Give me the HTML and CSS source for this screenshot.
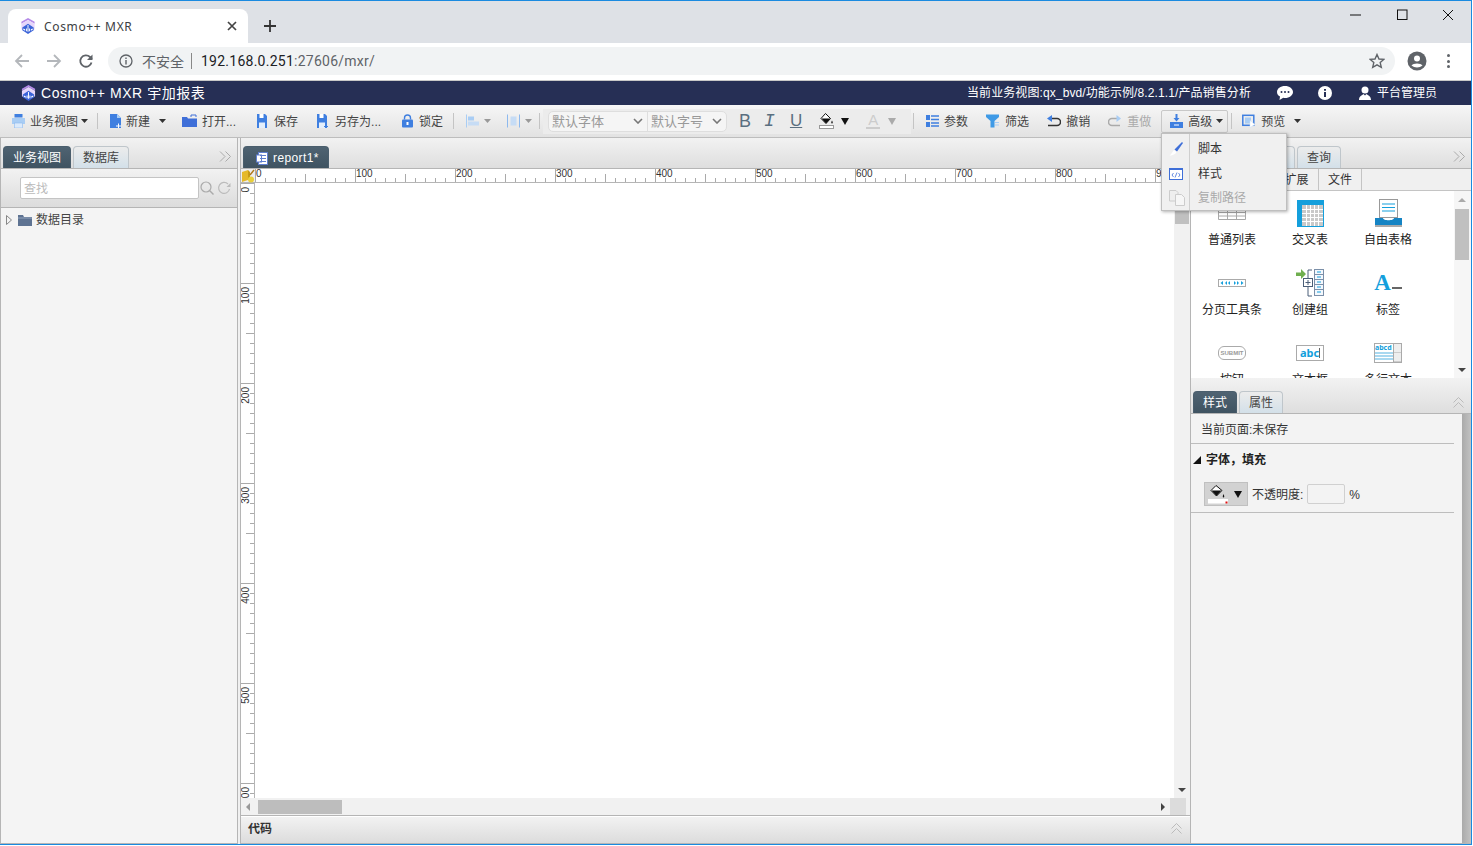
FILE: index.html
```html
<!DOCTYPE html>
<html lang="zh-CN">
<head>
<meta charset="utf-8">
<title>Cosmo++ MXR</title>
<link rel="stylesheet" href="styles.css">
</head>
<body>
<svg class="defs" width="0" height="0">
  <symbol id="logo" viewBox="0 0 16 18">
    <path d="M8 0 15 4 15 6 8 2 1 6 1 4Z" fill="#b58be8"/>
    <path d="M1 6 8 2 15 6 15 12 8 16 1 12Z" fill="#e6d6fa"/>
    <path d="M2 10 8 6 14 10 14 13 8 17 2 13Z" fill="#3a63d8"/>
    <path d="M3 12.500V11L5 12V13.500ZM6 11H7V14H6ZM7.500 7.500 8.500 7.500 8.500 14.500 7.500 14.500ZM9 11H10V14H9ZM11 12 13 11V12.500L11 13.500Z" fill="#fff"/>
  </symbol>
  <symbol id="caret" viewBox="0 0 7 4"><path d="M0 0H7L3.500 4Z"/></symbol>
  <symbol id="chev-r" viewBox="0 0 13 11"><path d="M1 .5 6 5.500 1 10.500M6.500 .5 11.500 5.500 6.500 10.500" fill="none" stroke="#aaa"/></symbol>
  <symbol id="chev-u" viewBox="0 0 11 11"><path d="M.5 5.500 5.500 .5 10.500 5.500M.5 10.500 5.500 5.500 10.500 10.500" fill="none" stroke="#bbb"/></symbol>
  <symbol id="fill" viewBox="0 0 15 16"><path d="M6.500 .5 2 5.500 7 10.500 11.500 5.500Z" fill="#fff" stroke="#111"/><path d="M2.500 5.500H11.500L7 10.500Z" fill="#111"/><path d="M13 7.500C12 9.500 12 10.500 13 10.500S14 9.500 13 7.500Z" fill="#111"/><rect x=".5" y="12.500" width="14" height="3" fill="#fff" stroke="#999"/></symbol>
</svg>

<div class="window">
  <div class="tabstrip">
    <div class="ctab">
      <svg class="fav"><use href="#logo"/></svg>
      <span class="ctab-title">Cosmo++ MXR</span>
      <svg class="ctab-x" viewBox="0 0 10 10"><path d="M1 1 9 9M9 1 1 9" stroke="#444" stroke-width="1.700"/></svg>
    </div>
    <svg class="newtab" viewBox="0 0 12 12"><path d="M6 0V12M0 6H12" stroke="#333" stroke-width="1.800"/></svg>
    <div class="winctl">
      <svg viewBox="0 0 12 12"><path d="M0 6H11" stroke="#111"/></svg>
      <svg viewBox="0 0 12 12"><rect x="1.500" y="1" width="9.500" height="9.500" fill="none" stroke="#111"/></svg>
      <svg viewBox="0 0 12 12"><path d="M1 1 11 11M11 1 1 11" stroke="#111"/></svg>
    </div>
  </div>

  <div class="navbar">
    <svg class="nav-ic" viewBox="0 0 16 16"><path d="M15 8H2M8 2 2 8 8 14" fill="none" stroke="#b4b7bb" stroke-width="1.800"/></svg>
    <svg class="nav-ic" viewBox="0 0 16 16"><path d="M1 8H14M8 2 14 8 8 14" fill="none" stroke="#b4b7bb" stroke-width="1.800"/></svg>
    <svg class="nav-ic" viewBox="0 0 16 16"><path d="M13.500 9.500A5.700 5.700 0 1 1 12 4L14 6" fill="none" stroke="#5f6368" stroke-width="1.800"/><path d="M14.500 1.500V7H9Z" fill="#5f6368"/></svg>
    <div class="omnibox">
      <svg class="info" viewBox="0 0 14 14"><circle cx="7" cy="7" r="6" fill="none" stroke="#5f6368" stroke-width="1.300"/><path d="M7 6V10.500M7 3.500V5" stroke="#5f6368" stroke-width="1.400"/></svg>
      <span class="insecure">不安全</span>
      <span class="url"><b>192.168.0.251</b>:27606/mxr/</span>
      <svg class="star" viewBox="0 0 16 16"><path d="M8 1.500 10 6 14.800 6.400 11.200 9.600 12.300 14.300 8 11.800 3.700 14.300 4.800 9.600 1.200 6.400 6 6Z" fill="none" stroke="#5f6368" stroke-width="1.400"/></svg>
    </div>
    <svg class="avatar" viewBox="0 0 20 20"><circle cx="10" cy="10" r="9.500" fill="#5f6368"/><circle cx="10" cy="7.500" r="3" fill="#fff"/><path d="M4.500 14.500C6 11.800 14 11.800 15.500 14.500 12.500 17 7.500 17 4.500 14.500Z" fill="#fff"/></svg>
    <div class="dots"><i></i><i></i><i></i></div>
  </div>

  <header class="apphead">
    <svg class="app-logo"><use href="#logo"/></svg>
    <span class="app-name">Cosmo++ MXR 宇加报表</span>
    <span class="cur-view">当前业务视图:qx_bvd/功能示例/8.2.1.1/产品销售分析</span>
    <svg class="hd-chat" viewBox="0 0 16 14"><path d="M8 0C3.500 0 0 2.600 0 6C0 8 1.200 9.600 3 10.600L2.500 14 6.300 11.700C6.900 11.900 7.400 12 8 12 12.500 12 16 9.300 16 6S12.500 0 8 0Z" fill="#fff"/><g fill="#262f55"><circle cx="4.500" cy="6" r="1"/><circle cx="8" cy="6" r="1"/><circle cx="11.500" cy="6" r="1"/></g></svg>
    <svg class="hd-info" viewBox="0 0 14 14"><circle cx="7" cy="7" r="7" fill="#fff"/><path d="M7 6V11M7 3V4.800" stroke="#262f55" stroke-width="2"/></svg>
    <svg class="hd-user" viewBox="0 0 12 14"><circle cx="6" cy="4" r="3.500" fill="#fff"/><path d="M0 14C0 10 3 9.500 4.500 8L6 9.500 7.500 8C9 9.500 12 10 12 14Z" fill="#fff"/></svg>
    <span class="user-name">平台管理员</span>
  </header>

  <div class="toolbar">
    <div class="tool t-view">
      <svg class="ic w13" viewBox="0 0 13 14"><rect x="2.500" y="0" width="8" height="3.500" fill="#3f7fe0"/><rect x="0" y="4" width="13" height="6" fill="#a9cdf4"/><rect x="2.500" y="9" width="8" height="5" fill="#dbeafb" stroke="#8db9ee" stroke-width=".6"/></svg>
      <span>业务视图</span><svg class="caret c-view"><use href="#caret"/></svg>
    </div>
    <i class="sep s-1"></i>
    <div class="tool t-new">
      <svg class="ic w11" viewBox="0 0 11 14"><path d="M0 0H7L11 4V14H0Z" fill="#3f7fe0"/><path d="M7 0V4H11" fill="#a9cdf4"/><path d="M6 12H11M8.500 9.500V14" stroke="#fff"/></svg>
      <span>新建</span><svg class="caret c-new"><use href="#caret"/></svg>
    </div>
    <div class="tool t-open">
      <svg class="ic w15" viewBox="0 0 15 12"><path d="M0 2H5L6 3.500H15V12H0Z" fill="#3f6fd8"/><path d="M9 2V0H14V2" fill="none" stroke="#3f6fd8"/></svg>
      <span>打开...</span>
    </div>
    <div class="tool t-save">
      <svg class="ic w10" viewBox="0 0 10 14"><path d="M0 0H8L10 2V14H0Z" fill="#3f7fe0"/><rect x="2.500" y="0" width="4" height="4" fill="#fff"/><rect x="2" y="8.500" width="6" height="5.500" fill="#e4effc"/></svg>
      <span>保存</span>
    </div>
    <div class="tool t-saveas">
      <svg class="ic w11" viewBox="0 0 11 14"><path d="M0 0H8L10 2V14H0Z" fill="#3f7fe0"/><rect x="2.500" y="0" width="4" height="4" fill="#fff"/><rect x="2" y="8.500" width="6" height="5.500" fill="#e4effc"/><path d="M7 12.500H11" stroke="#3f7fe0"/></svg>
      <span>另存为...</span>
    </div>
    <div class="tool t-lock">
      <svg class="ic w11" viewBox="0 0 11 13"><rect y="5" width="11" height="8" rx="1" fill="#3f7fe0"/><path d="M2.500 5V3.500A3 3 0 0 1 8.500 3.500V5" fill="none" stroke="#3f7fe0" stroke-width="1.400"/><rect x="4.500" y="7.500" width="2" height="3" fill="#fff"/></svg>
      <span>锁定</span>
    </div>
    <i class="sep s-2"></i>
    <div class="tool t-align">
      <svg class="ic w13" viewBox="0 0 13 13"><path d="M.5 0V13" stroke="#a9cdf4"/><rect x="2" y="2" width="6" height="4" fill="#a9cdf4"/><rect x="2" y="7" width="11" height="4" fill="#c6dcf5"/></svg>
      <svg class="caret dim"><use href="#caret"/></svg>
    </div>
    <div class="tool t-dist">
      <svg class="ic w13" viewBox="0 0 13 13"><path d="M.5 0V13M12.500 0V13" stroke="#8db9ee"/><rect x="3.500" y="2" width="6" height="9" fill="#c6dcf5"/></svg>
      <svg class="caret dim"><use href="#caret"/></svg>
    </div>
    <i class="sep s-3"></i>
    <div class="fontgroup">
      <div class="selects">
        <div class="sel sel-font"><span>默认字体</span><svg viewBox="0 0 10 6"><path d="M1 1 5 5 9 1" fill="none" stroke="#777" stroke-width="1.600"/></svg></div>
        <div class="sel sel-size"><span>默认字号</span><svg viewBox="0 0 10 6"><path d="M1 1 5 5 9 1" fill="none" stroke="#777" stroke-width="1.600"/></svg></div>
      </div>
      <span class="fmt f-b">B</span>
      <span class="fmt f-i">I</span>
      <span class="fmt f-u">U</span>
      <svg class="fillic"><use href="#fill"/></svg>
      <span class="tri"></span>
      <span class="fontcolor">A</span>
      <span class="tri tri-dim"></span>
    </div>
    <i class="sep s-4"></i>
    <div class="tool t-param">
      <svg class="ic w13" viewBox="0 0 13 12"><rect width="4" height="5" fill="#3f7fe0"/><rect y="7" width="4" height="5" fill="#3f7fe0"/><path d="M5 1H13M5 4.500H13M5 8H13M5 11H13" stroke="#3f7fe0" stroke-width="1.500"/></svg>
      <span>参数</span>
    </div>
    <div class="tool t-filter">
      <svg class="ic w13" viewBox="0 0 13 13"><path d="M0 0H13V2.500L8.500 6.500V13H4.500V6.500L0 2.500Z" fill="#3f9ae6"/><path d="M9 8H13M9 10.500H13" stroke="#a9cdf4"/></svg>
      <span>筛选</span>
    </div>
    <div class="tool t-undo">
      <svg class="ic w14" viewBox="0 0 14 12"><path d="M3 3.500H10A3.500 3.500 0 0 1 10 10.500H1" fill="none" stroke="#333" stroke-width="1.500"/><path d="M5 0V7L0 3.500Z" fill="#3f7fe0"/></svg>
      <span>撤销</span>
    </div>
    <div class="tool t-redo dimtool">
      <svg class="ic w13" viewBox="0 0 13 12"><path d="M10 3.500H4A3.500 3.500 0 0 0 4 10.500H12" fill="none" stroke="#aaa" stroke-width="1.500"/><path d="M8.500 0V7L13 3.500Z" fill="#a9cdf4"/></svg>
      <span>重做</span>
    </div>
    <div class="tool t-adv">
      <svg class="ic w13" viewBox="0 0 13 14"><path d="M6.500 0V6" stroke="#3f7fe0" stroke-width="2"/><path d="M3.500 4H9.500L6.500 7.500Z" fill="#3f7fe0"/><rect y="8" width="13" height="6" fill="#3f7fe0"/><rect x="4" y="10.500" width="5" height="1" fill="#fff"/></svg>
      <span>高级</span><svg class="caret"><use href="#caret"/></svg>
    </div>
    <i class="sep s-5"></i>
    <div class="tool t-prev">
      <svg class="ic w13" viewBox="0 0 13 13"><rect x=".8" y=".8" width="11" height="10" fill="none" stroke="#3f7fe0" stroke-width="1.500"/><rect x="3" y="3" width="6" height="6" fill="#a9cdf4"/><path d="M8 6 13 10 8 13Z" fill="#fff" stroke="#cfe2f9" stroke-width=".5"/></svg>
      <span>预览</span><svg class="caret c-prev"><use href="#caret"/></svg>
    </div>
  </div>

  <main class="workspace">
    <aside class="leftpanel">
      <div class="tabrow">
        <span class="ptab active lt-1">业务视图</span>
        <span class="ptab lt-2">数据库</span>
        <svg class="chev"><use href="#chev-r"/></svg>
      </div>
      <div class="searchrow">
        <div class="searchbox">查找</div>
        <svg class="s-ic" viewBox="0 0 14 14"><circle cx="6" cy="6" r="5" fill="none" stroke="#aaa" stroke-width="1.200"/><path d="M9.500 9.500 13.500 13.500" stroke="#aaa" stroke-width="1.400"/></svg>
        <svg class="s-ic" viewBox="0 0 14 14"><path d="M12.500 8A5.500 5.500 0 1 1 11 3" fill="none" stroke="#bbb" stroke-width="1.200"/><path d="M13.500 2V6H9.500Z" fill="#bbb"/></svg>
      </div>
      <div class="tree">
        <svg class="tree-ar" viewBox="0 0 6 10"><path d="M.5 .5 5.500 5 .5 9.500Z" fill="none" stroke="#888"/></svg>
        <svg class="tree-fd" viewBox="0 0 14 11"><path d="M0 0H5L6 2H14V11H0Z" fill="#5e7392"/><rect x="0" y="2.500" width="14" height="1" fill="#93a5bd"/></svg>
        <span>数据目录</span>
      </div>
    </aside>

    <section class="center">
      <div class="tabrow center-tabs">
        <span class="ptab active rep-tab">
          <svg class="rep-ic" viewBox="0 0 12 13"><rect x="2.500" y=".5" width="9" height="12" fill="#fff" stroke="#5f7fd0"/><rect x=".5" y="3" width="5" height="7" fill="#fff" stroke="#5f7fd0"/><path d="M4 3.500H10M4 6.500H10M4 9.500H10" stroke="#5f7fd0"/></svg>
          report1*
        </span>
      </div>
      <div class="rulerrow">
        <div class="corner">
          <svg viewBox="0 0 14 14"><path d="M1 3 7 1V11L1 13Z" fill="#e5b92a"/><path d="M7 1 9 3V9L7 11Z" fill="#c79a17"/><circle cx="10" cy="10.500" r="3" fill="#e9cf3a"/><path d="M9 6 13 1" stroke="#b07a1a" stroke-width="1.400"/></svg>
        </div>
        <div class="hruler">
          <span>0</span><span>100</span><span>200</span><span>300</span><span>400</span><span>500</span><span>600</span><span>700</span><span>800</span><span>900</span>
        </div>
      </div>
      <div class="canvasrow">
        <div class="vruler">
          <div><span>0</span></div><div><span>100</span></div><div><span>200</span></div><div><span>300</span></div><div><span>400</span></div><div><span>500</span></div><div><span>600</span></div>
        </div>
        <div class="canvas"></div>
        <div class="vscroll">
          <i class="v-thumb"></i>
          <i class="ar-down"></i>
        </div>
      </div>
      <div class="hscroll">
        <i class="ar-left"></i>
        <i class="h-thumb"></i>
        <i class="ar-right"></i>
        <i class="h-corner"></i>
      </div>
      <div class="codebar">
        <span>代码</span>
        <svg class="chev-u"><use href="#chev-u"/></svg>
      </div>
    </section>

    <aside class="rightpanel">
      <div class="comp">
        <div class="tabrow right-tabs">
          <span class="ptab rt-hidden"></span>
          <span class="ptab rt-query">查询</span>
          <svg class="chev"><use href="#chev-r"/></svg>
        </div>
        <div class="subtabs">
          <span class="sub sub-ext">扩展</span>
          <span class="sub sub-file">文件</span>
        </div>
        <div class="gridwrap">
          <div class="compgrid">
            <div class="cell">
              <div class="cell-ic"><svg width="28" height="28" viewBox="0 0 28 28"><path d="M.5 6.500H27.500V20.500H.5ZM.5 13.500H27.500M.5 17H27.500M9.500 6.500V20.500M18.500 6.500V20.500" fill="#fff" stroke="#a8a8a8"/></svg></div>
              <span>普通列表</span>
            </div>
            <div class="cell">
              <div class="cell-ic"><svg width="27" height="27" viewBox="0 0 27 27"><rect width="27" height="27" fill="#149fdc"/><rect x="5" y="5" width="21" height="21" fill="#c9c9c9"/><path d="M5 9.500H26M5 13.500H26M5 17.500H26M5 21.500H26M9.500 5V26M13.500 5V26M17.500 5V26M21.500 5V26" stroke="#fff"/></svg></div>
              <span>交叉表</span>
            </div>
            <div class="cell">
              <div class="cell-ic"><svg width="27" height="28" viewBox="0 0 27 28"><rect x="4.500" y=".5" width="18" height="18" fill="#fff" stroke="#999"/><path d="M7 5H20M7 8.500H20M7 12H20" stroke="#149fdc" stroke-width="1.200"/><path d="M0 19H8C8 22 19 22 19 19H27V26H0Z" fill="#1584c4"/><rect y="26" width="27" height="2" fill="#aaa"/></svg></div>
              <span>自由表格</span>
            </div>
            <div class="cell">
              <div class="cell-ic"><svg width="28" height="8" viewBox="0 0 28 8"><rect x=".5" y=".5" width="27" height="7" fill="#fff" stroke="#aaa"/><path d="M5 2V6L2.500 4ZM23 2V6L25.500 4Z" fill="#149fdc"/><path d="M9 2V6L7 4ZM12 2V6L10 4ZM16 2V6L18 4ZM19 2V6L21 4Z" fill="#149fdc"/></svg></div>
              <span>分页工具条</span>
            </div>
            <div class="cell">
              <div class="cell-ic"><svg width="28" height="28" viewBox="0 0 28 28"><path d="M0 3.500H5V0L10 5 5 10V7H0Z" fill="#6fae4e"/><path d="M16 1H12V9M12 17V27H16" fill="none" stroke="#4b5f78"/><rect x="7.500" y="9.500" width="9" height="8" fill="#fff" stroke="#4b5f78"/><path d="M9.500 13.500H14.500M12 11V16" stroke="#4b5f78"/><rect x="18.500" y=".5" width="9" height="26" fill="#f4f8fd" stroke="#7b8fa8"/><path d="M18.500 5.500H27.500M18.500 10.500H27.500M18.500 15.500H27.500M18.500 20.500H27.500" stroke="#7b8fa8"/><path d="M21 3H25M21 8H25M21 13H25M21 18H25M21 23H25" stroke="#149fdc"/></svg></div>
              <span>创建组</span>
            </div>
            <div class="cell">
              <div class="cell-ic ic-label"><span class="big-a">A</span><i class="a-dash"></i></div>
              <span>标签</span>
            </div>
            <div class="cell">
              <div class="cell-ic"><span class="submit">SUBMIT</span></div>
              <span>按钮</span>
            </div>
            <div class="cell">
              <div class="cell-ic"><span class="abc">abc<i></i></span></div>
              <span>文本框</span>
            </div>
            <div class="cell">
              <div class="cell-ic"><span class="multi"><span class="multi-t"><b>abcd</b><i></i><i></i><i></i></span><span class="multi-s"><i></i><i></i></span></span></div>
              <span>多行文本</span>
            </div>
          </div>
          <div class="gscroll">
            <i class="ar-up"></i>
            <i class="g-thumb"></i>
            <i class="ar-down g-down"></i>
          </div>
        </div>
      </div>

      <div class="stylepane">
        <div class="tabrow style-tabs">
          <span class="ptab active st-1">样式</span>
          <span class="ptab st-2">属性</span>
          <svg class="chev-u"><use href="#chev-u"/></svg>
        </div>
        <div class="stylebody">
          <div class="stylecontent">
            <div class="curpage">当前页面:未保存</div>
            <div class="sect"><i class="sect-tri"></i><b>字体，填充</b></div>
            <div class="fillrow">
              <div class="fillbtn">
                <svg class="fillbtn-ic" viewBox="0 0 20 19"><path d="M8 .5 3 5.500 8.500 11 14 5.500Z" fill="#fff" stroke="#111"/><path d="M3.500 5.500H13.500L8.500 11Z" fill="#111"/><path d="M15.500 9C14.500 11 14.500 12.500 15.500 12.500S16.500 11 15.500 9Z" fill="#111"/><rect y="14" width="20" height="4.500" fill="#fff"/><rect x="17.500" y="16.500" width="2" height="2" fill="#e01010"/></svg>
                <span class="tri"></span>
              </div>
              <span class="op-label">不透明度:</span>
              <div class="opacity"></div>
              <span class="pct">%</span>
            </div>
          </div>
          <div class="style-scroll"></div>
        </div>
      </div>
    </aside>
  </main>
</div>

<div class="menu">
  <div class="mi">
    <svg class="mi-ic" viewBox="0 0 14 14"><path d="M13 0 14 1 8 9.500 5.500 7.500Z" fill="#3f6fd8"/><path d="M5 8 7.500 10C6.500 12.500 3 13.800 .5 13.500 2.800 12 3.500 9.500 5 8Z" fill="#fff"/></svg>
    <span>脚本</span>
  </div>
  <div class="mi">
    <svg class="mi-ic" viewBox="0 0 14 12"><rect x=".5" y=".5" width="13" height="11" fill="#fff" stroke="#3f6fd8"/><rect width="14" height="2" fill="#3f6fd8"/><path d="M4.500 5 3 7 4.500 9M9.500 5 11 7 9.500 9M8 4.500 6 9.500" fill="none" stroke="#3f6fd8" stroke-width=".8"/></svg>
    <span>样式</span>
  </div>
  <div class="mi disabled">
    <svg class="mi-ic mi-copy" viewBox="0 0 16 16"><path d="M.5 .5H7L9 2.500V11H.5Z" fill="#eee" stroke="#ccc"/><path d="M6.500 4.500H12.500L15.500 7.500V15.500H6.500Z" fill="#f6f6f6" stroke="#ccc"/></svg>
    <span>复制路径</span>
  </div>
</div>
<div class="desk-edge"></div>
</body>
</html>
```

FILE: styles.css
```css
* { box-sizing: border-box; }
html, body { margin: 0; padding: 0; }
body {
  width: 1473px; height: 846px; overflow: hidden; position: relative; background: #fff;
  font: 12px/14px "Liberation Sans", "Noto Sans CJK SC", sans-serif; color: #333;
}
.defs { position: absolute; }
i { display: block; font-style: normal; }

.window {
  width: 1472px; height: 845px; display: flex; flex-direction: column;
  border-top: 1px solid #1a8ae0; border-right: 1px solid #1a8ae0; border-bottom: 1px solid #1a8ae0;
}

/* browser chrome */
.tabstrip { height: 42px; flex: none; background: #dee1e6; display: flex; align-items: flex-end; padding-left: 8px; }
.ctab { width: 240px; height: 34px; background: #fff; border-radius: 8px 8px 0 0; display: flex; align-items: center; padding: 0 12px; }
.fav { width: 16px; height: 17px; margin-right: 8px; }
.ctab-title { font: 12px/14px "Noto Sans", sans-serif; color: #3c4043; letter-spacing: .65px; flex: 1; padding-top: 1px; }
.ctab-x { width: 10px; height: 10px; margin-right: -1px; }
.newtab { width: 12px; height: 12px; margin: 0 0 11px 16px; }
.winctl { margin-left: auto; align-self: flex-start; display: flex; gap: 34px; padding: 8px 17px 0 0; }
.winctl svg { width: 12px; height: 12px; }

.navbar { height: 38px; flex: none; display: flex; align-items: center; padding: 0 12px 1px 14px; border-bottom: 1px solid #c8c8c8; background: #fff; }
.nav-ic { width: 16px; height: 16px; margin-right: 16px; }
.omnibox { margin-left: -2px; width: 1287px; height: 28px; border-radius: 14px; background: #f1f3f4; display: flex; align-items: center; padding: 0 10px 0 11px; flex: none; }
.info { width: 14px; height: 14px; margin-right: 9px; }
.insecure { font: 14px/16px "Noto Sans CJK SC", sans-serif; color: #5f6368; padding-right: 7px; border-right: 1px solid #888; margin-right: 9px; }
.url { font: 14px/16px Roboto, sans-serif; color: #5f6368; flex: 1; letter-spacing: .25px; }
.url b { font-weight: 400; color: #202124; }
.star { width: 16px; height: 16px; }
.avatar { width: 20px; height: 20px; margin-left: 12px; flex: none; }
.dots { margin-left: 20px; display: flex; flex-direction: column; gap: 2.500px; }
.dots i { width: 3px; height: 3px; border-radius: 50%; background: #5f6368; }

/* app header */
.apphead { height: 24px; flex: none; background: #262f55; color: #fff; display: flex; align-items: center; padding-left: 21px; }
.app-logo { width: 15px; height: 17px; margin-right: 5px; }
.app-name { font-size: 14px; line-height: 18px; flex: 1; letter-spacing: .55px; }
.cur-view { font-size: 12px; letter-spacing: .1px; }
.hd-chat { width: 16px; height: 14px; margin-left: 26px; }
.hd-info { width: 14px; height: 14px; margin-left: 25px; }
.hd-user { width: 12px; height: 14px; margin-left: 27px; }
.user-name { margin: 0 34px 0 6px; }

/* toolbar */
.toolbar { height: 33px; flex: none; display: flex; align-items: center; background: linear-gradient(#f6f6f6, #e2e2e2); border-bottom: 1px solid #bdbdbd; color: #444; }
.tool { display: flex; align-items: center; gap: 5px; flex: none; }
.tool > span, .sel > span { padding-top: 1px; }
.ic { height: 14px; flex: none; }
.w10 { width: 10px; } .w11 { width: 11px; } .w13 { width: 13px; } .w14 { width: 14px; } .w15 { width: 15px; }
.caret { width: 7px; height: 4px; fill: #333; flex: none; }
.caret.dim { fill: #999; }
.c-view { margin-left: -2px; }
.c-new { margin-left: 4px; }
.c-prev { margin-left: 4px; }
.sep { width: 1px; height: 16px; background: #c4c4c4; flex: none; }
.t-view { margin-left: 12px; }
.s-1 { margin-left: 9px; }
.t-new { margin-left: 12px; }
.t-open { margin-left: 16px; }
.t-save { margin-left: 21px; gap: 7px; }
.t-saveas { margin-left: 19px; gap: 7px; }
.t-lock { margin-left: 21px; gap: 6px; }
.s-2 { margin-left: 10px; }
.t-align { margin-left: 12px; }
.t-dist { margin-left: 16px; }
.s-3 { margin-left: 7px; }
.fontgroup { margin-left: 3px; width: 368px; height: 25px; background: #ececec; display: flex; align-items: center; padding-left: 5px; flex: none; }
.selects { display: flex; width: 179px; height: 21px; background: #f5f5f5; border: 1px solid #dedede; border-radius: 5px; color: #999; font-size: 13px; flex: none; }
.sel { display: flex; align-items: center; padding: 0 4px 0 3px; justify-content: space-between; }
.sel svg { width: 10px; height: 6px; }
.sel-font { width: 99px; border-right: 1px solid #dedede; }
.sel-size { flex: 1; }
.fmt { font: 18px/18px "Liberation Sans", sans-serif; color: #5a6f80; flex: none; }
.f-b { margin-left: 12px; }
.f-i { margin-left: 13px; font-family: "Liberation Mono", monospace; font-style: italic; }
.f-u { margin-left: 15px; text-decoration: underline; font-size: 17px; }
.fillic { width: 15px; height: 16px; margin-left: 17px; flex: none; }
.tri { width: 0; height: 0; border: 4px solid transparent; border-top: 7px solid #111; border-bottom: 0; margin-left: 7px; flex: none; }
.tri-dim { border-top-color: #aaa; margin-left: 8px; }
.fontcolor { margin-left: 17px; font-size: 15px; line-height: 14px; color: #ccc; border-bottom: 2px solid #ccc; padding: 0 2px; flex: none; }
.s-4 { margin-left: 2px; }
.t-param { margin-left: 12px; }
.t-filter { margin-left: 18px; gap: 6px; }
.t-undo { margin-left: 18px; }
.t-redo { margin-left: 18px; gap: 6px; }
.dimtool { color: #aaa; }
.t-adv { margin-left: 10px; width: 67px; height: 23px; border: 1px solid #c8c8c8; border-radius: 2px; padding-left: 8px; }
.t-adv .caret { margin-left: -1px; }
.s-5 { margin-left: 3px; }
.t-prev { margin-left: 10px; gap: 6px; }
.t-prev .c-prev { margin-left: 3px; }

/* workspace */
.workspace { flex: 1; display: flex; min-height: 0; background: #f0f0f0; }
.tabrow { height: 31px; flex: none; display: flex; align-items: flex-end; background: linear-gradient(#f2f2f2, #dedede); border-bottom: 1px solid #b5b5b5; position: relative; }
.ptab { height: 22px; padding-top: 1px; border-radius: 4px 4px 0 0; border: 1px solid #bfc6cb; border-bottom: 0; background: linear-gradient(#ececec, #d3e0e9); color: #444; display: flex; align-items: center; justify-content: center; flex: none; }
.ptab.active { background: linear-gradient(#4f6372, #3f5361); color: #fff; border-color: #4a5e6d; }
.chev { width: 13px; height: 11px; position: absolute; right: 5px; top: 13px; }
.chev-u { width: 11px; height: 11px; position: absolute; right: 8px; }

.leftpanel { width: 238px; flex: none; display: flex; flex-direction: column; background: #f4f4f4; border-left: 1px solid #b5b5b5; border-right: 1px solid #b5b5b5; border-bottom: 1px solid #b5b5b5; }
.lt-1 { width: 68px; margin-left: 2px; }
.lt-2 { width: 56px; margin-left: 2px; }
.searchrow { height: 39px; flex: none; display: flex; align-items: center; background: linear-gradient(#f2f2f2, #dcdcdc); border-bottom: 1px solid #b5b5b5; padding-left: 19px; gap: 1px; }
.searchbox { width: 179px; height: 22px; background: #fff; border: 1px solid #c4c4c4; border-radius: 2px; padding: 4px 3px 2px; color: #bbb; line-height: 15px; }
.s-ic { width: 14px; height: 14px; }
.s-ic + .s-ic { margin-left: 2px; }
.tree { height: 24px; display: flex; align-items: center; padding-left: 5px; color: #444; }
.tree-ar { width: 6px; height: 10px; margin-right: 6px; }
.tree-fd { width: 14px; height: 11px; margin-right: 4px; }

.center { width: 950px; margin-left: 2px; flex: none; display: flex; flex-direction: column; border-left: 1px solid #b5b5b5; }
.rep-tab { width: 86px; margin-left: 2px; gap: 5px; font-size: 12px; letter-spacing: .4px; justify-content: flex-start; padding-left: 12px; }
.rep-ic { width: 12px; height: 13px; }
.rulerrow { height: 14px; flex: none; display: flex; background: #fff; border-bottom: 1px solid #b5b5b5; }
.corner { width: 14px; flex: none; background: #eee; }
.corner svg { width: 14px; height: 14px; display: block; }
.hruler { flex: 1; display: flex; overflow: hidden; }
.hruler span {
  flex: none; width: 100px; height: 13px; font: 10px/10px "Liberation Sans", sans-serif; color: #333;
  border-left: 1px solid #aaa;
  background: linear-gradient(#aaa, #aaa) 49px 100% / 1px 8px no-repeat,
              repeating-linear-gradient(90deg, transparent 0 9px, #aaa 9px 10px) 0 100% / 100% 4px no-repeat;
}
.canvasrow { flex: 1; display: flex; min-height: 0; background: #fff; }
.vruler { width: 14px; flex: none; overflow: hidden; border-right: 1px solid #b5b5b5; }
.vruler div {
  height: 100px; border-top: 1px solid #aaa; padding-top: 3px;
  background: linear-gradient(#aaa, #aaa) 100% 49px / 8px 1px no-repeat,
              repeating-linear-gradient(180deg, transparent 0 9px, #aaa 9px 10px) 100% 0 / 4px 100% no-repeat;
}
.vruler span { display: block; writing-mode: vertical-rl; transform: rotate(180deg); font: 10px/10px "Liberation Sans", sans-serif; color: #333; width: 10px; }
.canvas { flex: 1; background: #fff; }
.vscroll { width: 16px; flex: none; background: #f1f1f1; position: relative; }
.v-thumb { position: absolute; left: 1px; top: 15px; width: 14px; height: 26px; background: #c0c0c0; }
.ar-down { width: 0; height: 0; border: 4px solid transparent; border-top: 4px solid #444; border-bottom: 0; position: absolute; left: 4px; bottom: 6px; }
.hscroll { height: 18px; flex: none; display: flex; align-items: center; background: #f1f1f1; border-bottom: 1px solid #b5b5b5; }
.ar-left { width: 0; height: 0; border: 4px solid transparent; border-right: 4px solid #999; border-left: 0; margin-left: 5px; }
.h-thumb { width: 84px; height: 14px; background: #bdbdbd; margin-left: 8px; }
.ar-right { width: 0; height: 0; border: 4px solid transparent; border-left: 4px solid #444; border-right: 0; margin-left: 819px; }
.h-corner { width: 16px; height: 17px; background: #dcdcdc; margin-left: 5px; align-self: flex-start; }
.codebar { height: 28px; flex: none; display: flex; align-items: center; padding: 0 0 3px 7px; position: relative; background: linear-gradient(#f2f2f2, #dcdcdc); border-top: 1px solid #fff; border-bottom: 1px solid #b5b5b5; font-weight: 700; color: #333; }

.rightpanel { width: 281px; flex: none; display: flex; flex-direction: column; border-left: 1px solid #b5b5b5; background: #f3f3f3; }
.comp { height: 240px; flex: none; display: flex; flex-direction: column; background: #fff; }
.right-tabs { padding-left: 63px; }
.rt-hidden { width: 41px; }
.rt-query { width: 44px; margin-left: 2px; }
.subtabs { height: 22px; flex: none; display: flex; justify-content: flex-start; padding-left: 80px; background: #f0f0f0; border-bottom: 1px solid #c4c4c4; }
.sub { display: flex; align-items: center; justify-content: center; border-right: 1px solid #c4c4c4; color: #333; padding-top: 1px; }
.sub-ext { width: 48px; padding-left: 4px; }
.sub-file { width: 43px; }
.gridwrap { flex: 1; display: flex; min-height: 0; }
.compgrid { flex: 1; overflow: hidden; display: grid; grid-template-columns: repeat(3, 78px); grid-auto-rows: 70px; padding-left: 2px; }
.cell { display: flex; flex-direction: column; align-items: center; color: #222; }
.cell-ic { height: 34px; margin-top: 5px; margin-bottom: 3px; display: flex; align-items: center; justify-content: center; flex: none; }
.ic-label { width: 28px; }
.big-a { font: 700 23px/24px "Liberation Serif", serif; color: #149fdc; }
.a-dash { width: 10px; height: 2px; background: #666; margin: 10px 0 0 1px; }
.submit { width: 28px; height: 14px; border: 1px solid #aaa; border-radius: 6px; font: 700 6px/12px "Liberation Sans", sans-serif; color: #999; text-align: center; overflow: hidden; }
.abc { width: 28px; height: 16px; border: 1px solid #aaa; font: 700 11px/14px "Noto Sans", sans-serif; color: #149fdc; padding-left: 3px; position: relative; background: #fff; }
.abc i { position: absolute; right: 3px; top: 2px; width: 1px; height: 10px; background: #666; }
.multi { width: 28px; height: 20px; border: 1px solid #aaa; display: flex; background: #fff; }
.multi-t { flex: 1; overflow: hidden; }
.multi-t b { display: block; font: 700 7px/7px "Noto Sans", sans-serif; color: #149fdc; }
.multi-t i { height: 2px; margin-top: 1px; background: #a8d8f0; }
.multi-s { width: 8px; border-left: 1px solid #aaa; display: flex; flex-direction: column; }
.multi-s i { flex: 1; background: #eee; border-bottom: 1px solid #ccc; }
.gscroll { width: 17px; flex: none; position: relative; background: #f6f6f6; }
.ar-up { width: 0; height: 0; border: 4px solid transparent; border-bottom: 4px solid #aaa; border-top: 0; position: absolute; left: 4px; top: 7px; }
.g-thumb { position: absolute; left: 1px; top: 18px; width: 14px; height: 51px; background: #c0c0c0; }
.g-down { left: 4px; bottom: 6px; }

.stylepane { flex: 1; display: flex; flex-direction: column; min-height: 0; }
.style-tabs { height: 36px; }
.style-tabs .chev-u { top: 19px; right: 7px; }
.st-1 { width: 44px; margin-left: 2px; }
.st-2 { width: 44px; margin-left: 2px; }
.stylebody { flex: 1; display: flex; min-height: 0; border-bottom: 1px solid #b5b5b5; }
.stylecontent { flex: 1; padding-right: 8px; }
.curpage { height: 30px; padding: 9px 0 0 10px; border-bottom: 1px solid #bdbdbd; }
.sect { height: 32px; display: flex; align-items: center; color: #222; padding-left: 2px; }
.sect b { font-weight: 700; margin-left: 5px; }
.sect-tri { width: 0; height: 0; border-bottom: 8px solid #111; border-left: 8px solid transparent; }
.fillrow { height: 37px; padding: 6px 0 6px 13px; display: flex; align-items: center; border-bottom: 1px solid #bdbdbd; }
.fillbtn { width: 44px; height: 24px; background: #d2d2d2; border: 1px solid #c0c0c0; display: flex; align-items: center; padding-left: 3px; margin-right: 4px; flex: none; }
.fillbtn-ic { width: 20px; height: 19px; flex: none; }
.fillbtn .tri { margin-left: 6px; }
.op-label, .pct { padding-top: 1px; }
.opacity { width: 38px; height: 20px; border: 1px solid #d0d0d0; border-radius: 2px; background: #f3f3f3; margin-left: 4px; margin-right: 4px; flex: none; }
.style-scroll { width: 9px; flex: none; background: linear-gradient(90deg, #aaa, #c2c2c2); }

/* dropdown menu lying over the tool panels */
.menu {
  position: absolute; left: 1161px; top: 133px; width: 126px; height: 78px; padding-top: 3px;
  background: linear-gradient(90deg, #f0f0f0 0 27px, #cfcfcf 27px 28px, #f0f0f0 28px);
  border: 1px solid #bfbfbf; box-shadow: 1px 1px 3px rgba(0,0,0,.3); color: #333;
}
.mi { height: 24.500px; display: flex; align-items: center; padding-left: 7px; }
.mi-ic { width: 14px; height: 14px; margin-right: 15px; flex: none; }
.mi.disabled { color: #aaa; }
.mi-copy { width: 16px; height: 16px; margin-right: 13px; }
.desk-edge { height: 1px; }
```
